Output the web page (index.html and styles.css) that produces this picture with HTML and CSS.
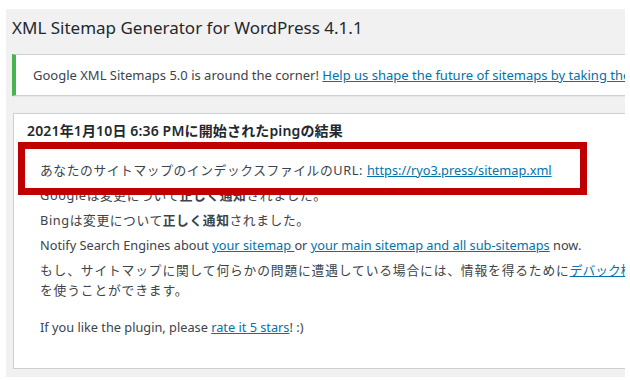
FILE: index.html
```html
<!DOCTYPE html>
<html lang="ja">
<head>
    <meta charset="UTF-8">
    <title>XML Sitemap Generator for WordPress</title>
    <link rel="stylesheet" href="styles.css">
</head>
<body>
    <div class="wrap">
        <div class="inner">
            <h1 class="page-title">XML Sitemap Generator for WordPress 4.1.1</h1>

            <div class="notice">
                <p>Google XML Sitemaps 5.0 is around the corner! <a href="#">Help us shape the future of sitemaps by taking the survey</a></p>
            </div>

            <div class="postbox">
                <h3 class="postbox-title">2021年1月10日 6:36 PMに開始されたpingの結果</h3>
                <div class="postbox-body">
                    <p class="ja">あなたのサイトマップのインデックスファイルのURL: <a href="#">https://ryo3.press/sitemap.xml</a></p>
                    <p class="ja">Googleは変更について<b>正しく通知</b>されました。</p>
                    <p class="ja">Bingは変更について<b>正しく通知</b>されました。</p>
                    <p>Notify Search Engines about <a href="#">your sitemap </a> or <a href="#">your main sitemap and all sub-sitemaps</a> now.</p>
                    <p class="ja ja-wide">もし、サイトマップに関して何らかの問題に遭遇している場合には、情報を得るために<a href="#">デバック機能</a><br>を使うことができます。</p>
                    <p class="rate">If you like the plugin, please <a href="#">rate it 5 stars</a>! :)</p>

                    <!-- 赤枠の強調 -->
                    <div class="highlight-box"></div>
                </div>
            </div>
        </div>
    </div>
</body>
</html>
```

FILE: styles.css
```css
html {
    box-sizing: border-box;
}
*, *:before, *:after {
    box-sizing: inherit;
}
body {
    margin: 0;
    padding: 9px 5px 3px 6px;
    background-color: #fff;
    font-family: "Noto Sans", "Noto Sans CJK JP", sans-serif;
    color: #3c434a;
}

.wrap {
    width: 619px;
    height: 368px;
    background-color: #f1f1f1;
    overflow: hidden;
}

.inner {
    width: 760px;
    padding: 8px 0 0 6px;
}

a {
    color: #0073aa;
}

.page-title {
    margin: 0 0 15px 0;
    font-size: 17px;
    font-weight: 400;
    line-height: 22px;
    color: #23282d;
}

.notice {
    background-color: #fff;
    border: 1px solid #ccd0d4;
    border-left: 4px solid #46b450;
    box-shadow: 0 1px 1px rgba(0, 0, 0, 0.04);
    padding: 0 12px 0 17px;
    height: 42px;
    display: flex;
    align-items: center;
}

.notice p {
    margin: 0;
    font-size: 13px;
}

.postbox {
    margin: 17px 0 0 1px;
    background-color: #fff;
    border: 1px solid #ccd0d4;
    height: 256px;
}

.postbox-title {
    margin: 0;
    padding: 7px 13px 0;
    font-size: 14px;
    font-weight: 600;
    letter-spacing: 0.15px;
    line-height: 20px;
    color: #23282d;
}

.postbox-body {
    position: relative;
    padding: 19px 26px 0;
    font-size: 12.75px;
}

.postbox-body p {
    margin: 0 0 5px;
    line-height: 20px;
}

.postbox-body .ja {
    letter-spacing: 0.6px;
}

.postbox-body .ja-wide {
    letter-spacing: 0.85px;
}

.postbox-body .ja a {
    letter-spacing: 0;
}

.postbox-body b {
    font-weight: 700;
}

.postbox-body .rate {
    margin-top: 17px;
}

.highlight-box {
    position: absolute;
    top: 1px;
    left: 4px;
    width: 569px;
    height: 53px;
    border: 7px solid #c00000;
}
```
